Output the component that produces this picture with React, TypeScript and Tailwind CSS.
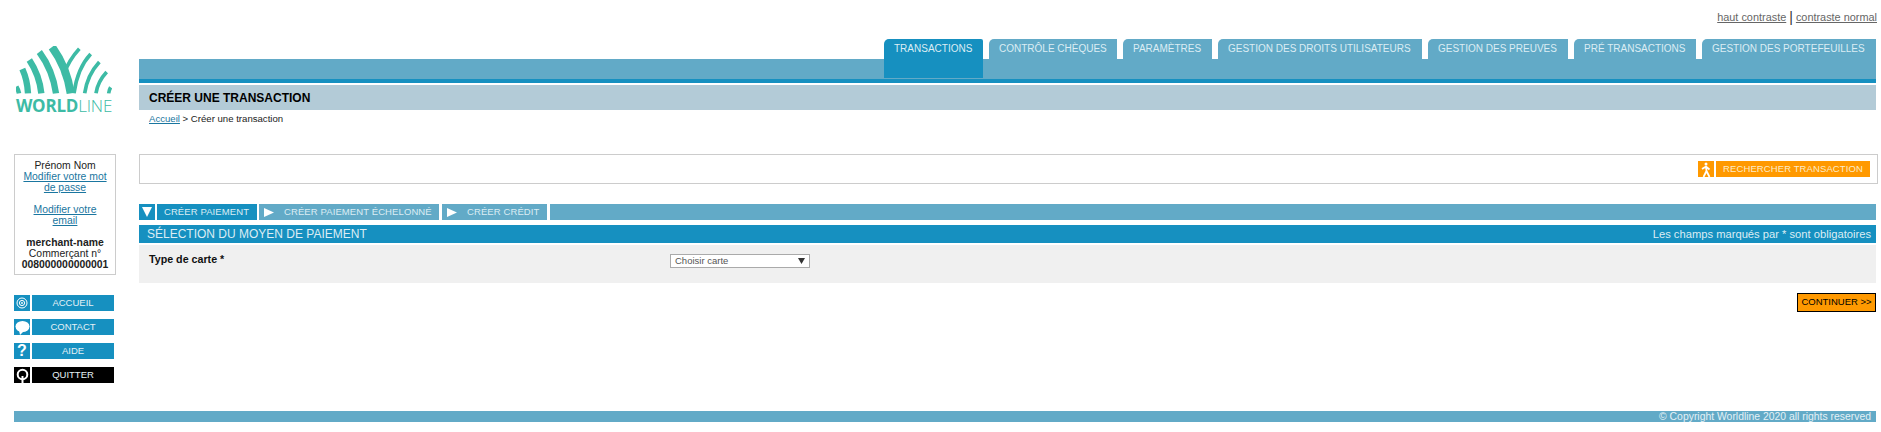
const tabs = [
  { label: 'Transactions', w: 'w-[99px]', active: true },
  { label: 'Contrôle chèques', w: 'w-[128px]' },
  { label: 'Paramètres', w: 'w-[89px]' },
  { label: 'Gestion des droits utilisateurs', w: 'w-[204px]' },
  { label: 'Gestion des preuves', w: 'w-[140px]' },
  { label: 'Pré transactions', w: 'w-[122px]' },
  { label: 'Gestion des portefeuilles', w: 'w-[174px]' },
]

function Logo() {
  return (
    <div className="flex w-[96px] flex-col items-center">
      <svg width="96" height="48" viewBox="48 138 288 144" fill="none" stroke="#3dbba5">
        <g strokeWidth="19">
          <path d="M57 280 Q55 270 49 260" strokeWidth="14" />
          <path d="M84 280 Q82 240 67 207" />
          <path d="M124 280 Q118 225 88 180" />
          <path d="M168 280 Q158 210 118 156" />
          <path d="M212 280 Q200 200 156 141" strokeWidth="24" />
        </g>
        <g strokeWidth="11">
          <path d="M190 225 Q208 178 238 146" />
          <path d="M222 280 Q232 205 272 162" />
          <path d="M254 280 Q262 225 298 186" />
          <path d="M288 280 Q293 245 320 216" />
          <path d="M326 280 Q327 270 332 262" />
        </g>
      </svg>
      <div className="mt-[4px] font-['Open_Sans'] text-[17px] leading-[16px] tracking-[-0.2px] text-[#3dbba5]">
        <span className="font-bold">WORLD</span>
        <span className="font-light">LINE</span>
      </div>
    </div>
  )
}

function SideButton({ label, dark, children }: { label: string; dark?: boolean; children: React.ReactNode }) {
  const bg = dark ? 'bg-black' : 'bg-[#1690c0]'
  return (
    <div className="flex h-[16px] gap-[2px]">
      <div className={`flex w-[16px] items-center justify-center ${bg}`}>{children}</div>
      <div className={`flex w-[82px] items-center justify-center text-[9.5px] text-[#e4f1f6] ${bg}`}>{label}</div>
    </div>
  )
}

function SubTab({ label, w, className }: { label: string; w: string; className?: string }) {
  return (
    <div className={`flex h-[16px] items-center bg-[#62aac7] pt-[1px] text-[9.5px] tracking-[0.1px] text-[#dcedf4] ${w} ${className ?? ''}`}>
      <svg width="10" height="9" viewBox="0 0 10 9" className="ml-[5px] mr-[10px] shrink-0" fill="white">
        <path d="M0 0 L10 4.5 L0 9 Z" />
      </svg>
      {label}
    </div>
  )
}

export default function App() {
  return (
    <div className="h-[432px] w-[1881px] overflow-hidden bg-white font-['Liberation_Sans',Arial,sans-serif] text-[11px] text-black">
      <div className="flex h-[39px] items-start justify-end pr-[4px] pt-[11px] text-[10.9px] leading-[13px] text-[#666]">
        <a className="underline">haut contraste</a>
        <span className="mx-[3px] text-[14px] leading-[13px] text-[#333]">|</span>
        <a className="underline">contraste normal</a>
      </div>

      <div className="flex">
        <aside className="w-[139px] shrink-0 pl-[14px]">
          <div className="ml-[2px] mt-[7px]">
            <Logo />
          </div>
          <div className="mt-[40px] h-[121px] w-[102px] border border-[#ccc] px-[5px] pt-[5px] text-center text-[10.4px] leading-[11px] text-[#222]">
            Prénom Nom
            <br />
            <a className="text-[#1a76a0] underline">Modifier votre mot de passe</a>
            <br />
            <br />
            <a className="text-[#1a76a0] underline">Modifier votre email</a>
            <br />
            <br />
            <b>merchant-name</b>
            <br />
            Commerçant n°
            <br />
            <b>008000000000001</b>
          </div>
          <div className="mt-[20px] flex flex-col gap-[8px]">
            <SideButton label="ACCUEIL">
              <svg width="12" height="12" viewBox="0 0 12 12" fill="none" stroke="white">
                <circle cx="6" cy="6" r="5" />
                <circle cx="6" cy="6" r="2.6" />
                <circle cx="6" cy="6" r="0.6" />
              </svg>
            </SideButton>
            <SideButton label="CONTACT">
              <svg width="15" height="15" viewBox="0 0 15 15" fill="white">
                <ellipse cx="7.5" cy="6.5" rx="7" ry="5.5" />
                <path d="M4 10 L5 15 L9 11 Z" />
              </svg>
            </SideButton>
            <SideButton label="AIDE">
              <span className="text-[16px] font-bold leading-[16px] text-white">?</span>
            </SideButton>
            <SideButton label="QUITTER" dark>
              <svg width="13" height="16" viewBox="0 0 13 16" fill="none" stroke="white" strokeWidth="2">
                <circle cx="6.5" cy="7.5" r="4.8" />
                <path d="M6.5 9 V16" />
              </svg>
            </SideButton>
          </div>
        </aside>

        <main className="min-w-0 flex-1 pr-[5px]">
          <div className="flex h-[44px] items-start justify-end gap-[6px] border-b-[4px] border-[#1690c0] bg-[linear-gradient(to_bottom,white_20px,#62aac7_20px)]">
            {tabs.map((t) => (
              <div
                key={t.label}
                className={`rounded-tl-[5px] pl-[10px] pt-[4px] text-[10px] uppercase leading-[12px] text-[#dcedf4] ${t.w} ${
                  t.active ? 'h-[39px] rounded-tr-[2px] bg-[#1690c0]' : 'h-[20px] bg-[#62aac7]'
                }`}
              >
                {t.label}
              </div>
            ))}
          </div>

          <h1 className="mt-[2px] flex h-[25px] items-center bg-[#b3cbd7] pl-[10px] pt-[1px] text-[12px] font-bold">
            CRÉER UNE TRANSACTION
          </h1>

          <div className="h-[44px] pl-[10px] pt-[3px] text-[9.6px] leading-[12px] text-[#222]">
            <a className="text-[#1a76a0] underline">Accueil</a> &gt; Créer une transaction
          </div>

          <div className="-mr-[2px] flex h-[30px] items-start justify-end border border-[#ccc] pr-[7px] pt-[6px]">
            <div className="flex h-[16px] gap-[2px]">
              <div className="flex w-[16px] items-center justify-center bg-[#ff9900]">
                <svg width="13" height="15" viewBox="0 0 13 15" fill="none" stroke="white" strokeWidth="1.8">
                  <circle cx="6" cy="2" r="1.5" fill="white" stroke="none" />
                  <path d="M2 7 L6 4.5 L9.5 7.5 M6 4.5 L6.5 9 L3.5 15 M6.5 9 L9.5 15" />
                </svg>
              </div>
              <div className="flex w-[154px] items-center justify-center bg-[#ff9900] pt-[1px] text-[9.5px] tracking-[0.1px] text-[#fdecc8]">
                RECHERCHER TRANSACTION
              </div>
            </div>
          </div>

          <div className="mt-[20px] flex h-[16px] gap-[2px]">
            <div className="flex w-[16px] items-center justify-center bg-[#1690c0]">
              <svg width="10" height="10" viewBox="0 0 10 10" fill="white">
                <path d="M0 0 H10 L5 10 Z" />
              </svg>
            </div>
            <div className="flex w-[100px] items-center justify-center bg-[#1690c0] pr-[1px] pt-[1px] text-[9.5px] tracking-[0.1px] text-[#dcedf4]">
              CRÉER PAIEMENT
            </div>
            <SubTab label="CRÉER PAIEMENT ÉCHELONNÉ" w="w-[180px]" />
            <SubTab label="CRÉER CRÉDIT" w="w-[105px]" className="ml-[1px]" />
            <div className="ml-[1px] flex-1 bg-[#62aac7]" />
          </div>

          <div className="mt-[5px] flex h-[18px] items-center justify-between bg-[#1690c0] pl-[8px] pr-[5px] text-[#dcedf4]">
            <span className="text-[12px]">SÉLECTION DU MOYEN DE PAIEMENT</span>
            <span className="text-[11.2px]">Les champs marqués par * sont obligatoires</span>
          </div>

          <div className="mt-[2px] flex h-[38px] bg-[#f0f0f0] pl-[10px] pt-[8px]">
            <label className="w-[521px] text-[10.7px] font-bold leading-[12px] text-[#111]">Type de carte *</label>
            <div className="mt-[1px] flex h-[14px] w-[140px] items-center justify-between border border-[#aaa] bg-white pl-[4px] pr-[4px] text-[9.5px] text-[#555]">
              <span>Choisir carte</span>
              <svg width="7" height="6" viewBox="0 0 7 6" fill="#333">
                <path d="M0 0 H7 L3.5 6 Z" />
              </svg>
            </div>
          </div>

          <div className="mt-[10px] flex justify-end">
            <button className="h-[19px] w-[79px] border border-black bg-[#ff9900] text-[9.5px] text-black">
              CONTINUER &gt;&gt;
            </button>
          </div>
        </main>
      </div>

      <div className="ml-[14px] mr-[5px] mt-[28px] flex h-[11px] items-center justify-end bg-[#62aac7] pr-[5px] text-[10.4px] leading-[11px] text-[#e4f1f6]">
        © Copyright Worldline 2020 all rights reserved
      </div>
    </div>
  )
}
